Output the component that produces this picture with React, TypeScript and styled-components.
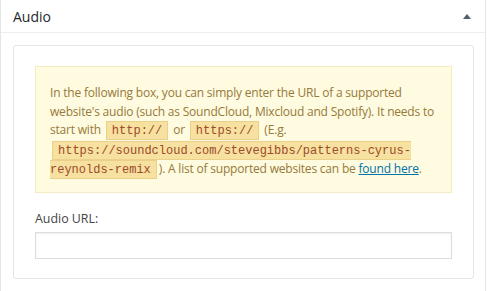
import * as React from "react";
import styled, { createGlobalStyle } from "styled-components";

const GlobalStyle = createGlobalStyle`
  body {
    margin: 0;
    background: #fff;
    font-family: "Open Sans", "Noto Sans", sans-serif;
  }
`;

//the whole metabox, runs past the bottom of the window
const Postbox = styled.div`
  width: 484px;
  height: 320px;
  border: 1px solid #e5e5e5;
  border-top: none;
  background: #fff;
`;

const Header = styled.div`
  height: 33px;
  display: flex;
  align-items: center;
  justify-content: space-between;
  padding: 0 14px 0 12px;
  border-bottom: 1px solid #eeeeee;
  box-sizing: border-box;
`;

const Title = styled.h2`
  margin: 0;
  font-size: 14px;
  font-weight: 400;
  color: #23282d;
`;

const Toggle = styled.span`
  width: 0;
  height: 0;
  border-left: 4px solid transparent;
  border-right: 4px solid transparent;
  border-bottom: 5px solid #555d66;
`;

const Inside = styled.div`
  padding: 12px 11px 0 12px;
`;

const Panel = styled.div`
  border: 1px solid #e5e5e5;
  border-radius: 3px;
  padding: 20px 21px 19px 21px;
`;

const Notice = styled.div`
  background: #fefbe0;
  border: 1px solid #f3ecc2;
  padding: 17px 10px 12px 14px;
  font-size: 12px;
  letter-spacing: -0.2px;
  line-height: 18.6px;
  color: #97793a;
`;

const Code = styled.code`
  font-family: "Liberation Mono", "DejaVu Sans Mono", monospace;
  font-size: 12px;
  letter-spacing: 0;
  color: #9c4a2a;
  background: #f7e1a0;
  border: 1px solid #ebd08a;
  padding: 2px 5px 1px;
  margin: 0 2px;
`;

const Link = styled.a`
  color: #0073aa;
  text-decoration: underline;
`;

const Field = styled.div`
  display: flex;
  flex-direction: column;
  gap: 5px;
  margin-top: 17px;
`;

const Label = styled.label`
  font-size: 12.4px;
  color: #444;
`;

const Input = styled.input`
  height: 27px;
  box-sizing: border-box;
  border: 1px solid #dddddd;
  box-shadow: inset 0 1px 2px rgba(0, 0, 0, 0.07);
  margin: 0;
`;

export default function App() {
  return (
    <>
      <GlobalStyle />
      <Postbox>
        <Header>
          <Title>Audio</Title>
          <Toggle />
        </Header>
        <Inside>
          <Panel>
            <Notice>
              In the following box, you can simply enter the URL of a supported
              website's audio (such as SoundCloud, Mixcloud and Spotify). It needs
              to start with <Code>http://</Code> or <Code>https://</Code> (E.g.{" "}
              <Code>https://soundcloud.com/stevegibbs/patterns-cyrus-reynolds-remix</Code>
              ). A list of supported websites can be <Link href="#">found here</Link>.
            </Notice>
            <Field>
              <Label>Audio URL:</Label>
              <Input type="text" />
            </Field>
          </Panel>
        </Inside>
      </Postbox>
    </>
  );
}
